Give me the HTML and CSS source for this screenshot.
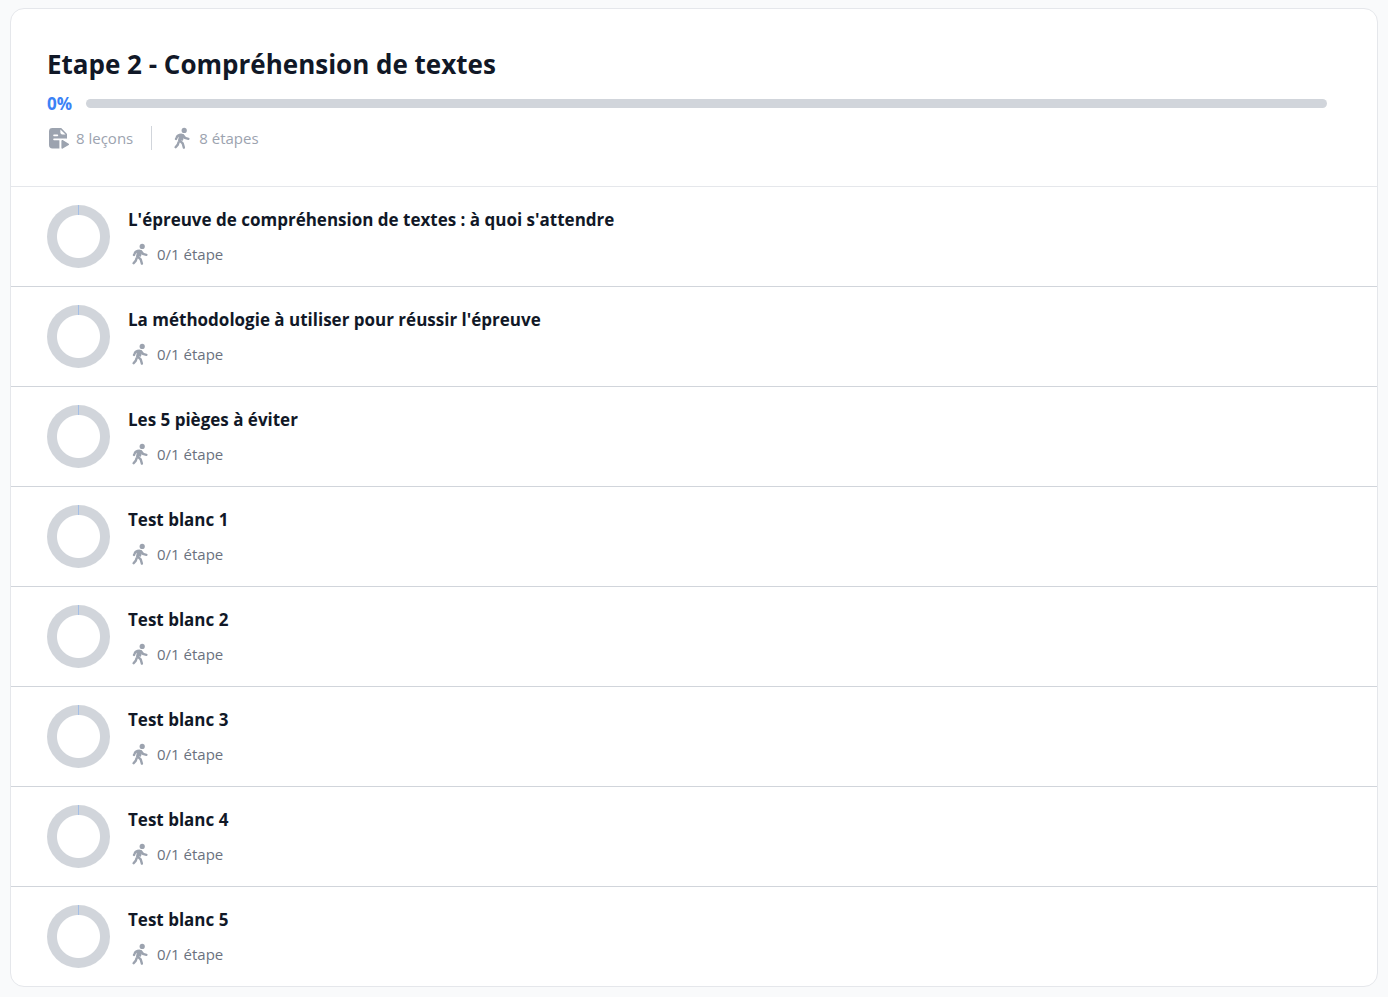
FILE: index.html
```html
<!DOCTYPE html>
<html lang="fr">
<head>
    <meta charset="UTF-8">
    <meta name="viewport" content="width=device-width, initial-scale=1.0">
    <title>Etape 2 - Compréhension de textes</title>
    <link rel="stylesheet" href="styles.css">
</head>
<body>
    <!-- Shared icons -->
    <svg class="sprite" aria-hidden="true">
        <symbol id="icon-walk" viewBox="0 0 24 24">
            <circle cx="14.2" cy="4.4" r="2.6" fill="currentColor"/>
            <path d="M10.4 8.2h3l.8 2.6-1.4 4-3.6-.6z" fill="currentColor"/>
            <path d="M6 13l.6-1.4c.6-1.6 2-2.8 4.600-2.800 1.600 0 2.500.5 3 1.800l.6 1.200 3.600 1M10.400 9.600l-1.200 4.600 3.500 3.200 1.200 4.200M8.600 16.200l-.8 2.400-2.200 2.600" fill="none" stroke="currentColor" stroke-width="2.400" stroke-linecap="round" stroke-linejoin="round"/>
        </symbol>
        <symbol id="icon-lesson" viewBox="0 0 24 24">
            <path d="M5.4 2h8.8L20 8v5.4h-6v9.100H5.400A3.400 3.400 0 0 1 2 19.100V5.400A3.400 3.400 0 0 1 5.400 2z" fill="currentColor"/>
            <path d="M13.400 3.400v3a2 2 0 0 0 2 2h3.200z" fill="#fff"/>
            <path d="M7 9.400h3.400M7 13.400h12.500M13.200 13.400v9" fill="none" stroke="#fff" stroke-width="1.600" stroke-linecap="round"/>
            <path d="M14.400 15v6.800c0 .8.700 1.100 1.300.7l6-3.400c.5-.3.5-1 0-1.400l-6-3.600c-.6-.4-1.300 0-1.300.9z" fill="currentColor"/>
        </symbol>
    </svg>

    <main class="card">
        <header class="card-header">
            <h1>Etape 2 - Compréhension de textes</h1>
            <div class="progress">
                <span class="progress-value">0%</span>
                <div class="progress-bar" role="progressbar" aria-valuenow="0" aria-valuemin="0" aria-valuemax="100"></div>
            </div>
            <div class="meta">
                <span class="meta-item"><svg class="icon"><use href="#icon-lesson"/></svg>8 leçons</span>
                <span class="divider"></span>
                <span class="meta-item"><svg class="icon"><use href="#icon-walk"/></svg>8 étapes</span>
            </div>
        </header>

        <div class="lessons">
            <a class="lesson" href="#">
                <span class="ring"></span>
                <span class="lesson-body">
                    <span class="lesson-title">L'épreuve de compréhension de textes : à quoi s'attendre</span>
                    <span class="lesson-steps"><svg class="icon"><use href="#icon-walk"/></svg>0/1 étape</span>
                </span>
            </a>
            <a class="lesson" href="#">
                <span class="ring"></span>
                <span class="lesson-body">
                    <span class="lesson-title">La méthodologie à utiliser pour réussir l'épreuve</span>
                    <span class="lesson-steps"><svg class="icon"><use href="#icon-walk"/></svg>0/1 étape</span>
                </span>
            </a>
            <a class="lesson" href="#">
                <span class="ring"></span>
                <span class="lesson-body">
                    <span class="lesson-title">Les 5 pièges à éviter</span>
                    <span class="lesson-steps"><svg class="icon"><use href="#icon-walk"/></svg>0/1 étape</span>
                </span>
            </a>
            <a class="lesson" href="#">
                <span class="ring"></span>
                <span class="lesson-body">
                    <span class="lesson-title">Test blanc 1</span>
                    <span class="lesson-steps"><svg class="icon"><use href="#icon-walk"/></svg>0/1 étape</span>
                </span>
            </a>
            <a class="lesson" href="#">
                <span class="ring"></span>
                <span class="lesson-body">
                    <span class="lesson-title">Test blanc 2</span>
                    <span class="lesson-steps"><svg class="icon"><use href="#icon-walk"/></svg>0/1 étape</span>
                </span>
            </a>
            <a class="lesson" href="#">
                <span class="ring"></span>
                <span class="lesson-body">
                    <span class="lesson-title">Test blanc 3</span>
                    <span class="lesson-steps"><svg class="icon"><use href="#icon-walk"/></svg>0/1 étape</span>
                </span>
            </a>
            <a class="lesson" href="#">
                <span class="ring"></span>
                <span class="lesson-body">
                    <span class="lesson-title">Test blanc 4</span>
                    <span class="lesson-steps"><svg class="icon"><use href="#icon-walk"/></svg>0/1 étape</span>
                </span>
            </a>
            <a class="lesson" href="#">
                <span class="ring"></span>
                <span class="lesson-body">
                    <span class="lesson-title">Test blanc 5</span>
                    <span class="lesson-steps"><svg class="icon"><use href="#icon-walk"/></svg>0/1 étape</span>
                </span>
            </a>
        </div>
    </main>
</body>
</html>
```
FILE: styles.css
```css
* {
    box-sizing: border-box;
}

body {
    font-family: "Segoe UI", "Open Sans", "Noto Sans", sans-serif;
    background-color: #f9fafb;
    color: #111827;
    margin: 0;
    padding: 8px 10px 10px;
}

.sprite {
    display: none;
}

.card {
    background-color: white;
    border: 1px solid #e5e7eb;
    border-radius: 14px;
    overflow: hidden;
}

.card-header {
    padding: 36px;
    border-bottom: 1px solid #e5e7eb;
}

h1 {
    margin: 0 0 7px;
    font-size: 26px;
    font-weight: 700;
    line-height: 38px;
}

.progress {
    display: flex;
    align-items: center;
    gap: 14px;
    margin-bottom: 9px;
    padding-right: 14px;
    line-height: 27px;
}

.progress-value {
    color: #3b82f6;
    font-size: 17px;
    font-weight: 700;
}

.progress-bar {
    flex: 1;
    height: 9px;
    border-radius: 5px;
    background-color: #d1d5db;
}

.meta {
    display: flex;
    align-items: center;
    gap: 18px;
    color: #9ca3af;
}

.meta-item,
.lesson-steps {
    display: flex;
    align-items: center;
    gap: 5px;
    font-size: 15px;
    line-height: 24px;
}

.icon {
    width: 24px;
    height: 24px;
    color: #9ca3af;
}

.divider {
    width: 1px;
    height: 24px;
    background-color: #d1d5db;
}

.lesson {
    display: flex;
    align-items: flex-start;
    gap: 18px;
    padding: 18px 36px;
    border-bottom: 1px solid #d1d5db;
    color: inherit;
    text-decoration: none;
}

.lesson:last-child {
    border-bottom: none;
}

.lesson:hover {
    background-color: #f9fafb;
}

/* Progress ring, the blue tick marks the start */
.ring {
    width: 63px;
    height: 63px;
    border-radius: 50%;
    background:
        radial-gradient(circle, white 21px, transparent 22px),
        linear-gradient(#a3bfe8, #a3bfe8) top center / 1px 10px no-repeat,
        #d1d5db;
}

.lesson-body {
    display: flex;
    flex-direction: column;
    gap: 7px;
}

.lesson-title {
    font-size: 17px;
    font-weight: 700;
    line-height: 30px;
}

.lesson-steps {
    color: #6b7280;
}
```
